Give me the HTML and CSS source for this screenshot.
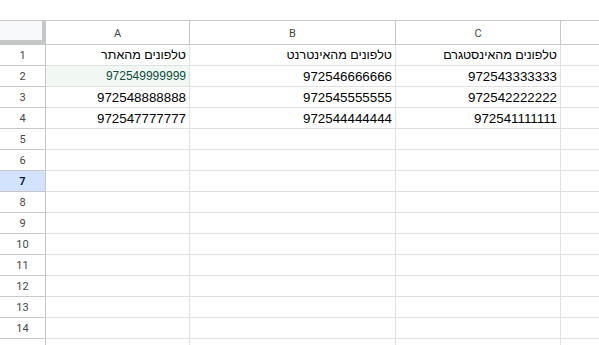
FILE: index.html
```html
<!DOCTYPE html>
<html lang="he">
<head>
  <meta charset="UTF-8" />
  <title>Sheet</title>
  <link rel="stylesheet" href="styles.css">
</head>
<body>
  <div class="toolbar-gap"></div>
  <div class="sheet" id="sheet">
    <div class="corner"></div>
    <div class="col-head">A</div>
    <div class="col-head">B</div>
    <div class="col-head">C</div>
    <div class="col-head"></div>

    <div class="row-head">1</div>
    <div class="cell" dir="rtl">טלפונים מהאתר</div>
    <div class="cell" dir="rtl">טלפונים מהאינטרנט</div>
    <div class="cell" dir="rtl">טלפונים מהאינסטגרם</div>
    <div class="cell"></div>

    <div class="row-head">2</div>
    <div class="cell small">972549999999</div>
    <div class="cell">972546666666</div>
    <div class="cell">972543333333</div>
    <div class="cell"></div>

    <div class="row-head">3</div>
    <div class="cell">972548888888</div>
    <div class="cell">972545555555</div>
    <div class="cell">972542222222</div>
    <div class="cell"></div>

    <div class="row-head">4</div>
    <div class="cell">972547777777</div>
    <div class="cell">972544444444</div>
    <div class="cell">972541111111</div>
    <div class="cell"></div>
  </div>

  <script>
    // empty rows 5..15
    const sheet = document.getElementById('sheet');
    for (let i = 5; i <= 15; i++) {
      const head = document.createElement('div');
      head.className = i === 7 ? 'row-head active' : 'row-head';
      head.textContent = i;
      sheet.appendChild(head);
      for (let c = 0; c < 4; c++) {
        const cell = document.createElement('div');
        cell.className = 'cell';
        sheet.appendChild(cell);
      }
    }
  </script>
</body>
</html>
```

FILE: styles.css
```css
html, body {
  margin: 0;
  background: #fff;
  overflow: hidden;
}
.toolbar-gap {
  height: 20px;
  border-bottom: 1px solid #c7c7c7;
}
.sheet {
  display: grid;
  grid-template-columns: 46px 144px 206px 165px 120px;
  grid-template-rows: 24px;
  grid-auto-rows: 21px;
  font-family: "Liberation Sans", Arial, sans-serif;
}
.corner, .col-head {
  box-sizing: border-box;
  border-right: 1px solid #c7c7c7;
  border-bottom: 1px solid #c7c7c7;
}
.corner {
  background: #f8f9fa;
  border-right: 4px solid #c4c7c5;
  border-bottom: 5px solid #c4c7c5;
}
.col-head {
  font-family: Roboto, "Liberation Sans", sans-serif;
  font-size: 11px;
  color: #444746;
  display: flex;
  align-items: center;
  justify-content: center;
  padding-top: 1px;
}
.row-head {
  box-sizing: border-box;
  border-right: 1px solid #c7c7c7;
  border-bottom: 1px solid #c7c7c7;
  font-family: Roboto, "Liberation Sans", sans-serif;
  font-size: 11px;
  color: #444746;
  display: flex;
  align-items: center;
  justify-content: center;
}
.row-head.active {
  background: #d3e3fd;
  color: #041e49;
  font-weight: bold;
}
.cell {
  box-sizing: border-box;
  border-right: 1px solid #e1e1e1;
  border-bottom: 1px solid #e1e1e1;
  font-size: 13.33px;
  color: #000;
  display: flex;
  align-items: center;
  justify-content: flex-end;
  padding: 0 3px;
  white-space: nowrap;
  overflow: hidden;
}
.cell[dir="rtl"] {
  justify-content: flex-start;
  font-size: 12.5px;
}
.cell.small {
  font-size: 12px;
  color: #0f4f3f;
  background: #f1f8f4;
}
```
